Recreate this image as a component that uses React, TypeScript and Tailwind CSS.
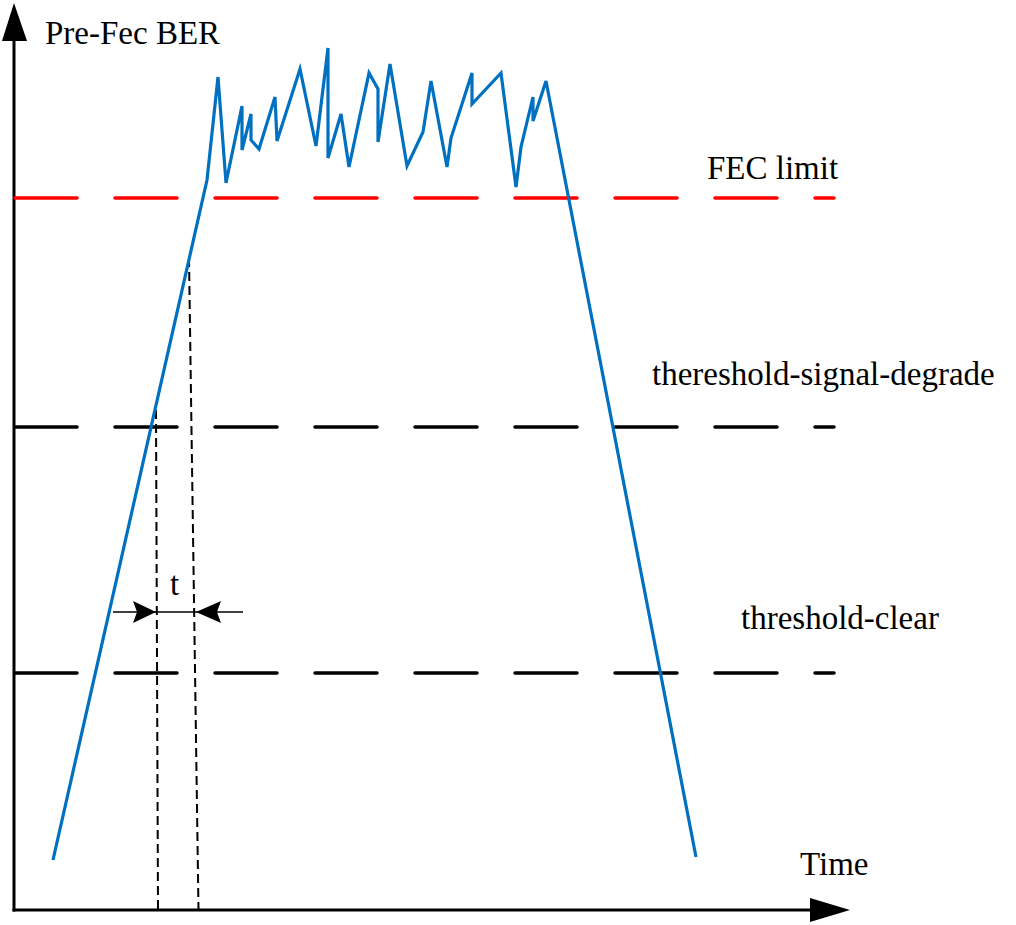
const berPoints: [number, number][] = [
  [53, 860], [207, 180], [218, 77], [226, 183], [242, 106], [242, 150], [251, 114],
  [251, 140], [259, 149], [275, 97], [277, 141], [300, 69], [316, 146], [328, 48],
  [328, 158], [341, 114], [349, 167], [369, 73], [378, 89], [378, 142], [390, 64],
  [407, 166], [423, 132], [431, 81], [447, 167], [451, 138], [472, 73], [472, 104],
  [501, 73], [516, 187], [521, 147], [533, 97], [533, 121], [546, 81], [696, 857],
];

const serif = "'Liberation Serif', 'Times New Roman', serif";

// horizontal threshold lines: y, colour
const thresholds = [
  { y: 198, color: "#ff0000" },
  { y: 427, color: "#000000" },
  { y: 673, color: "#000000" },
];

const labels = [
  { x: 45, y: 44, text: "Pre-Fec BER" },
  { x: 707, y: 179, text: "FEC limit" },
  { x: 652, y: 385, text: "thereshold-signal-degrade" },
  { x: 741, y: 629, text: "threshold-clear" },
  { x: 800, y: 875, text: "Time" },
];

export default function App() {
  return (
    <div className="h-[925px] w-[1016px] overflow-hidden bg-white">
      <svg width="1016" height="925" viewBox="0 0 1016 925" className="block">
        {/* axes */}
        <line x1="14" y1="40" x2="14" y2="911.5" stroke="#000" strokeWidth="3" />
        <polygon points="14,3 2,41 27,41" fill="#000" />
        <line x1="12.5" y1="910" x2="812" y2="910" stroke="#000" strokeWidth="3" />
        <polygon points="850,910 810,898 810,922" fill="#000" />

        {/* thresholds */}
        {thresholds.map((t) => (
          <line
            key={t.y}
            x1="15"
            y1={t.y}
            x2="834"
            y2={t.y}
            stroke={t.color}
            strokeWidth="3.5"
            strokeLinecap="round"
            strokeDasharray="62 38"
          />
        ))}

        {/* projection lines */}
        <line x1="156" y1="410" x2="158" y2="910" stroke="#000" strokeWidth="2" strokeDasharray="9 5" />
        <line x1="189" y1="258" x2="198.5" y2="910" stroke="#000" strokeWidth="2" strokeDasharray="9 5" />

        {/* t marker */}
        <line x1="113" y1="612" x2="243" y2="612" stroke="#000" strokeWidth="1.6" />
        <polygon points="156,612 133,601 137,612 133,623" fill="#000" />
        <polygon points="196,612 221,601 217,612 221,623" fill="#000" />

        {/* BER curve */}
        <polyline
          points={berPoints.map((p) => p.join(",")).join(" ")}
          fill="none"
          stroke="#0070c0"
          strokeWidth="3.2"
          strokeLinejoin="miter"
        />

        {labels.map((l) => (
          <text key={l.text} x={l.x} y={l.y} fontFamily={serif} fontSize="33" fill="#000">
            {l.text}
          </text>
        ))}
        <text x="170" y="595" fontFamily={serif} fontSize="33" fill="#000">
          t
        </text>
      </svg>
    </div>
  );
}
